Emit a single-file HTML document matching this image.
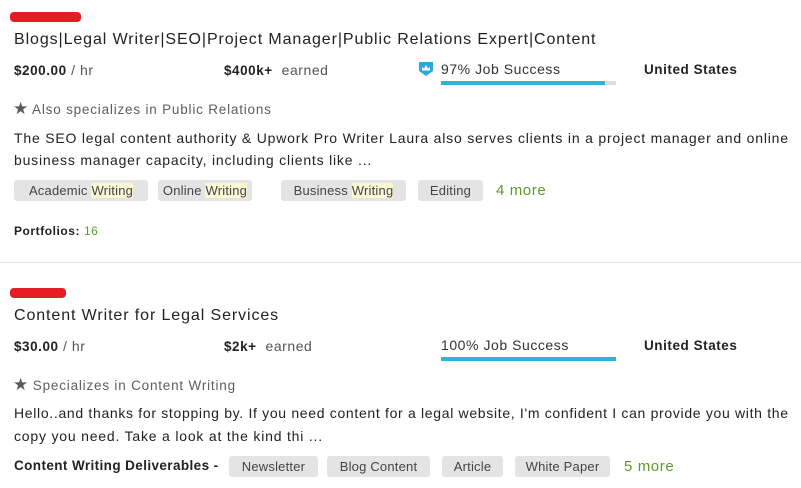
<!DOCTYPE html>
<html><head><meta charset="utf-8"><style>
body{margin:0;width:801px;height:488px;background:#fff;position:relative;overflow:hidden;font-family:"Liberation Sans",sans-serif;color:#222}
.a{position:absolute;white-space:nowrap}
.red{position:absolute;background:#e41c23;border-radius:4px;height:10px}
.t{font-size:16px;letter-spacing:.9px;color:#222}
.b{font-size:13.5px;font-weight:bold;letter-spacing:.55px}
.m{font-size:14px;color:#555;letter-spacing:.55px}
.s{font-size:13.5px;color:#5e5e5e;letter-spacing:.8px}
.d{font-size:14px;letter-spacing:.8px;color:#222}
.tag{position:absolute;height:21px;line-height:21px;background:#e4e4e4;border-radius:3px;font-size:13px;color:#444;text-align:center;letter-spacing:.2px;white-space:nowrap}
.tag span{background:#fbf8d6}
.g{color:#5c9c2c}
.bar{position:absolute;height:4px;background:#29b5e0}
.star{color:#5a5a5a;font-size:17px;letter-spacing:0}
</style></head><body>
<div class="red" style="left:10px;top:12px;width:71px"></div>
<div class="a t" style="left:14px;top:31px">Blogs|Legal Writer|SEO|Project Manager|Public Relations Expert|Content</div>
<div class="a" style="left:14px;top:62px"><span class="b">$200.00</span> <span class="m">/ hr</span></div>
<div class="a" style="left:224px;top:62px"><span class="b">$400k+</span> &nbsp;<span class="m">earned</span></div>
<svg class="a" style="left:418px;top:61px" width="16" height="16" viewBox="0 0 16 16"><path d="M1 1h14v9l-7 5-7-5z" fill="#2aa8e0"/><path d="M4 6l2 1.5L8 4l2 3.5L12 6v3.5H4z" fill="#fff"/></svg>
<div class="a m" style="left:441px;top:61px;color:#333">97% Job Success</div>
<div style="position:absolute;left:441px;top:81px;width:175px;height:4px;background:#ddd"></div>
<div class="bar" style="left:441px;top:81px;width:164px"></div>
<div class="a b" style="left:644px;top:62px">United States</div>
<div class="a s" style="left:13px;top:99px"><span class="star">★</span> Also specializes in Public Relations</div>
<div class="a d" style="left:14px;top:130px">The SEO legal content authority &amp; Upwork Pro Writer Laura also serves clients in a project manager and online</div>
<div class="a d" style="left:14px;top:152px">business manager capacity, including clients like ...</div>
<div class="tag" style="left:14px;top:180px;width:134px">Academic <span>Writing</span></div>
<div class="tag" style="left:158px;top:180px;width:94px">Online <span>Writing</span></div>
<div class="tag" style="left:281px;top:180px;width:125px">Business <span>Writing</span></div>
<div class="tag" style="left:418px;top:180px;width:65px">Editing</div>
<div class="a g" style="left:496px;top:182px;font-size:15px;letter-spacing:.6px">4 more</div>
<div class="a b" style="left:14px;top:224px;font-size:12px">Portfolios: <span class="g" style="font-weight:normal">16</span></div>
<div style="position:absolute;left:0;top:262px;width:801px;height:1px;background:#e0e0e0"></div>
<div class="red" style="left:10px;top:288px;width:56px"></div>
<div class="a t" style="left:14px;top:307px">Content Writer for Legal Services</div>
<div class="a" style="left:14px;top:338px"><span class="b">$30.00</span> <span class="m">/ hr</span></div>
<div class="a" style="left:224px;top:338px"><span class="b">$2k+</span> &nbsp;<span class="m">earned</span></div>
<div class="a m" style="left:441px;top:337px;color:#333">100% Job Success</div>
<div class="bar" style="left:441px;top:357px;width:175px"></div>
<div class="a b" style="left:644px;top:338px">United States</div>
<div class="a s" style="left:13px;top:375px"><span class="star">★</span> Specializes in Content Writing</div>
<div class="a d" style="left:14px;top:405px;letter-spacing:.68px">Hello..and thanks for stopping by. If you need content for a legal website, I'm confident I can provide you with the</div>
<div class="a d" style="left:14px;top:428px">copy you need. Take a look at the kind thi ...</div>
<div class="a b" style="left:14px;top:458px;font-size:13.5px;letter-spacing:.4px">Content Writing Deliverables -</div>
<div class="tag" style="left:229px;top:456px;width:89px">Newsletter</div>
<div class="tag" style="left:327px;top:456px;width:103px">Blog Content</div>
<div class="tag" style="left:442px;top:456px;width:61px">Article</div>
<div class="tag" style="left:515px;top:456px;width:95px">White Paper</div>
<div class="a g" style="left:624px;top:458px;font-size:15px;letter-spacing:.6px">5 more</div>
</body></html>
